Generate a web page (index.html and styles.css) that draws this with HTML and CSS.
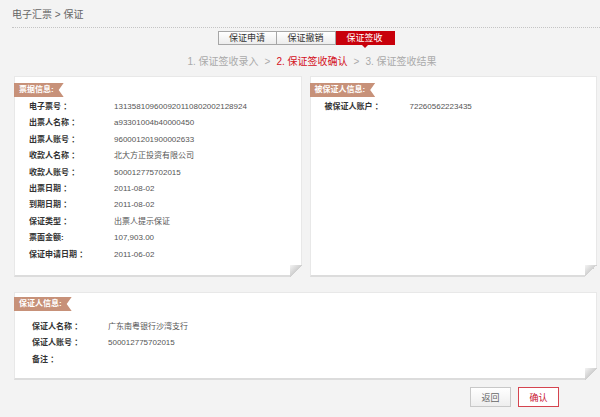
FILE: index.html
```html
<!DOCTYPE html>
<html lang="zh-CN">
<head>
    <meta charset="utf-8">
    <title>保证签收确认</title>
    <link rel="stylesheet" href="styles.css">
</head>
<body>

<div class="crumb">电子汇票 &gt; 保证</div>

<div class="tabs">
    <span class="tab">保证申请</span>
    <span class="tab">保证撤销</span>
    <span class="tab on">保证签收</span>
</div>

<div class="steps">
    <span>1. 保证签收录入</span><span class="sep">&gt;</span><span class="cur">2. 保证签收确认</span><span class="sep">&gt;</span><span>3. 保证签收结果</span>
</div>

<div class="main">
    <div class="cols">
        <div class="card fold">
            <div class="ribbon">票据信息:</div>
            <div class="rows">
                <div class="row"><span class="lbl">电子票号 ：</span><span class="val">131358109600920110802002128924</span></div>
                <div class="row"><span class="lbl">出票人名称 ：</span><span class="val">a93301004b40000450</span></div>
                <div class="row"><span class="lbl">出票人账号 ：</span><span class="val">960001201900002633</span></div>
                <div class="row"><span class="lbl">收款人名称 ：</span><span class="val">北大方正投资有限公司</span></div>
                <div class="row"><span class="lbl">收款人账号 ：</span><span class="val">500012775702015</span></div>
                <div class="row"><span class="lbl">出票日期 ：</span><span class="val">2011-08-02</span></div>
                <div class="row"><span class="lbl">到期日期 ：</span><span class="val">2011-08-02</span></div>
                <div class="row"><span class="lbl">保证类型 ：</span><span class="val">出票人提示保证</span></div>
                <div class="row"><span class="lbl">票面金额:</span><span class="val">107,903.00</span></div>
                <div class="row"><span class="lbl">保证申请日期 ：</span><span class="val">2011-06-02</span></div>
            </div>
        </div>
        <div class="card fold">
            <div class="ribbon">被保证人信息:</div>
            <div class="rows">
                <div class="row"><span class="lbl">被保证人账户 ：</span><span class="val">72260562223435</span></div>
            </div>
        </div>
    </div>

    <div class="card wide fold">
        <div class="ribbon">保证人信息:</div>
        <div class="rows">
            <div class="row"><span class="lbl">保证人名称 ：</span><span class="val">广东南粤银行沙湾支行</span></div>
            <div class="row"><span class="lbl">保证人账号 ：</span><span class="val">500012775702015</span></div>
            <div class="row"><span class="lbl">备注 ：</span><span class="val"></span></div>
        </div>
    </div>

    <div class="btns">
        <button class="btn">返回</button>
        <button class="btn ok">确认</button>
    </div>
</div>

</body>
</html>
```

FILE: styles.css
```css
body {
    margin: 0;
    background-color: #f3f3f3;
    font-family: "Liberation Sans", "Noto Sans CJK SC", sans-serif;
    color: #333;
}
.crumb {
    margin-left: 12px;
    padding: 9px 0 6px;
    line-height: 12px;
    font-size: 10px;
    color: #666;
    border-bottom: 1px dotted #c4c4c4;
}
.tabs {
    margin-left: 12px;
    margin-top: 3px;
    display: flex;
    justify-content: center;
}
.tab {
    position: relative;
    width: 59px;
    height: 14px;
    box-sizing: border-box;
    border: 1px solid #a6a6a6;
    border-left: none;
    background: linear-gradient(#ffffff, #ececec);
    font-size: 9px;
    line-height: 12px;
    text-align: center;
    color: #333;
}
.tab:first-child {
    border-left: 1px solid #a6a6a6;
}
.tab.on {
    background: #c8000b;
    border-color: #c8000b;
    color: #fff;
}
.tab.on::after {
    content: "";
    position: absolute;
    left: 50%;
    bottom: -4px;
    margin-left: -3px;
    border-left: 3px solid transparent;
    border-right: 3px solid transparent;
    border-top: 3px solid #c8000b;
}
.steps {
    margin-left: 12px;
    margin-top: 11px;
    text-align: center;
    font-size: 10px;
    line-height: 12px;
    color: #aaa;
    padding-left: 12px;
}
.steps .sep {
    margin: 0 6px;
}
.steps .cur {
    color: #d3101c;
}
.main {
    padding: 8px 3px 0 14px;
}
.cols {
    display: flex;
    gap: 8px;
}
.card {
    position: relative;
    flex: 1;
    height: 201px;
    background: #fff;
    border: 1px solid #e8e8e8;
    border-bottom: 2px solid #dcdcdc;
    box-sizing: border-box;
    padding-top: 6px;
}
.card.wide {
    height: 88px;
    margin-top: 15px;
    padding-top: 4px;
}
.fold::after {
    content: "";
    position: absolute;
    right: -1px;
    bottom: -2px;
    width: 12px;
    height: 12px;
    background: linear-gradient(to top left, #f3f3f3 50%, #cfcfcf 50%, #f4f4f4 100%);
}
.ribbon {
    width: fit-content;
    margin-left: -1px;
    height: 14px;
    line-height: 14px;
    padding: 0 10px 0 5px;
    background: #c79179;
    color: #fff;
    font-weight: bold;
    font-size: 8px;
    clip-path: polygon(0 0, 100% 0, calc(100% - 5px) 50%, 100% 100%, 0 100%);
}
.rows {
    padding-left: 14px;
    margin-top: 2px;
}
.card.wide .rows {
    padding-left: 17px;
    margin-top: 8px;
}
.row {
    display: flex;
    line-height: 16.4px;
    font-size: 8px;
}
.lbl {
    width: 85px;
    flex: none;
    font-weight: bold;
    color: #333;
}
.card.wide .lbl {
    width: 76px;
}
.val {
    color: #555;
}
.btns {
    display: flex;
    justify-content: flex-end;
    gap: 7px;
    margin-top: 7px;
    padding-right: 38px;
}
.btn {
    width: 41px;
    height: 20px;
    padding: 0;
    border: 1px solid #c8c8c8;
    background: linear-gradient(#ffffff, #eeeeee);
    font-family: "Liberation Sans", "Noto Sans CJK SC", sans-serif;
    font-size: 9px;
    color: #666;
    cursor: pointer;
}
.btn.ok {
    border-color: #d5444f;
    color: #c8102e;
    background: #fff;
}
```
